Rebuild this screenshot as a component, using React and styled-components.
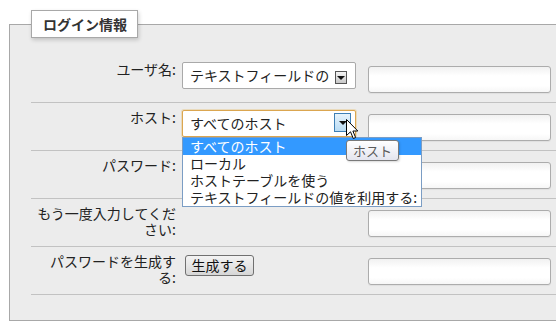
import React from 'react';
import styled, { createGlobalStyle } from 'styled-components';

const GlobalStyle = createGlobalStyle`
  html, body {
    margin: 0;
    background: #fff;
    overflow: hidden;
  }
  body {
    font-family: "Noto Sans CJK JP", "DejaVu Sans", sans-serif;
    color: #222;
  }
`;

const Page = styled.div`
  padding: 10px 0 0 9px;
  width: 640px;
`;

const Fieldset = styled.fieldset`
  margin: 0;
  padding: 17px 0 25px 21px;
  border: 1px solid #a8a8a8;
  background: #ececec;
  min-width: 0;
`;

const Legend = styled.legend`
  box-sizing: border-box;
  height: 28px;
  line-height: 26px;
  padding: 0 10px 0 11px;
  border: 1px solid #a8a8a8;
  background: #fff;
  box-shadow: 1px 2px 4px rgba(0, 0, 0, 0.18);
  font-size: 14px;
  font-weight: bold;
  color: #333;
`;

const Row = styled.div`
  display: grid;
  grid-template-columns: 147px 190px 183px;
  align-items: start;
  height: 47px;
  border-bottom: 1px solid #c2c2c2;
`;

const Label = styled.div`
  padding: 6px 2px 0 4px;
  font-size: 14px;
  line-height: 16px;
  text-align: right;
  color: #222;
`;

const FieldCell = styled.div`
  position: relative;
  padding-left: 4px;
`;

const SelectBox = styled.div`
  position: relative;
  box-sizing: border-box;
  width: 174px;
  height: 27px;
  margin-top: 7px;
  padding-left: 7px;
  border: 1px solid ${p => (p.$focus ? '#dba650' : '#a9a9a9')};
  border-radius: 2px;
  background: #fff;
  box-shadow: ${p => (p.$focus ? '0 0 0 1px rgba(230, 185, 100, 0.35)' : 'none')};
  font-size: 14px;
  line-height: 25px;
  white-space: nowrap;
`;

const SelectText = styled.span`
  display: block;
  width: 141px;
`;

const ArrowButton = styled.div`
  position: absolute;
  box-sizing: border-box;
  right: ${p => (p.$hover ? '4px' : '8px')};
  top: ${p => (p.$hover ? '2px' : '8px')};
  width: ${p => (p.$hover ? '17px' : '12px')};
  height: ${p => (p.$hover ? '19px' : '13px')};
  border: 1px solid ${p => (p.$hover ? '#3d7fb5' : '#555')};
  background: ${p =>
    p.$hover
      ? 'linear-gradient(#e6f3fc, #b9dcf4)'
      : 'linear-gradient(#f4f4f4, #c8c8c8)'};
  display: flex;
  align-items: center;
  justify-content: center;

  &::after {
    content: '';
    border-left: 4px solid transparent;
    border-right: 4px solid transparent;
    border-top: 4px solid #111;
    margin-top: 1px;
  }
`;

const DropList = styled.ul`
  position: absolute;
  left: 4px;
  top: 34px;
  z-index: 5;
  box-sizing: border-box;
  width: 240px;
  margin: 0;
  padding: 0;
  list-style: none;
  border: 1px solid #7b9dc4;
  background: #fff;
`;

const DropItem = styled.li`
  height: 17px;
  padding-left: 7px;
  font-size: 14px;
  line-height: 17px;
  white-space: nowrap;
  background: ${p => (p.$active ? '#3399ff' : '#fff')};
  color: ${p => (p.$active ? '#fff' : '#222')};
`;

const Tooltip = styled.div`
  position: absolute;
  left: 168px;
  top: 37px;
  z-index: 7;
  box-sizing: border-box;
  height: 21px;
  padding: 0 6px;
  border: 1px solid #7a7a7a;
  border-radius: 3px;
  background: linear-gradient(#ffffff, #e4e5ef);
  box-shadow: 1px 1px 2px rgba(0, 0, 0, 0.15);
  font-size: 13px;
  line-height: 19px;
  color: #5a5a5a;
  white-space: nowrap;
`;

const Cursor = styled.svg`
  position: absolute;
  left: 168px;
  top: 16px;
  z-index: 8;
`;

const TextInput = styled.div`
  box-sizing: border-box;
  width: 183px;
  height: 27px;
  margin-top: 11px;
  border: 1px solid #acacac;
  border-radius: 3px;
  background: linear-gradient(#f1f1f1, #fff 35%, #fff 75%, #f6f6f6);
  box-shadow: 0 1px 1px rgba(0, 0, 0, 0.06);
`;

const Button = styled.button`
  box-sizing: border-box;
  width: 69px;
  height: 21px;
  margin: 8px 0 0 3px;
  padding: 0;
  border: 1px solid #707070;
  border-radius: 3px;
  background: linear-gradient(#f3f3f3, #e6e6e6 50%, #d6d6d6);
  font-family: inherit;
  font-size: 14px;
  line-height: 19px;
  color: #111;
`;

const hosts = ['すべてのホスト', 'ローカル', 'ホストテーブルを使う', 'テキストフィールドの値を利用する:'];

export default function App() {
  return (
    <>
      <GlobalStyle />
      <Page lang="ja">
        <Fieldset>
          <Legend>ログイン情報</Legend>

          <Row>
            <Label>ユーザ名:</Label>
            <FieldCell>
              <SelectBox>
                <SelectText>テキストフィールドの</SelectText>
                <ArrowButton />
              </SelectBox>
            </FieldCell>
            <TextInput />
          </Row>

          <Row>
            <Label>ホスト:</Label>
            <FieldCell style={{ zIndex: 4 }}>
              <SelectBox $focus>
                <SelectText>すべてのホスト</SelectText>
                <ArrowButton $hover />
              </SelectBox>
              <DropList>
                {hosts.map((h, i) => (
                  <DropItem key={h} $active={i === 0}>{h}</DropItem>
                ))}
              </DropList>
              <Cursor width="13" height="21" viewBox="0 0 13 21">
                <path
                  d="M0.5 0.5 L0.5 16.5 L4.5 12.8 L7.3 19.5 L9.6 18.5 L6.9 12 L11.8 12 Z"
                  fill="#fff"
                  stroke="#000"
                  strokeWidth="1"
                  strokeLinejoin="round"
                />
              </Cursor>
              <Tooltip>ホスト</Tooltip>
            </FieldCell>
            <TextInput />
          </Row>

          <Row>
            <Label>パスワード:</Label>
            <FieldCell />
            <TextInput />
          </Row>

          <Row>
            <Label>もう一度入力してください:</Label>
            <FieldCell />
            <TextInput />
          </Row>

          <Row>
            <Label>パスワードを生成する:</Label>
            <FieldCell>
              <Button>生成する</Button>
            </FieldCell>
            <TextInput />
          </Row>
        </Fieldset>
      </Page>
    </>
  );
}
